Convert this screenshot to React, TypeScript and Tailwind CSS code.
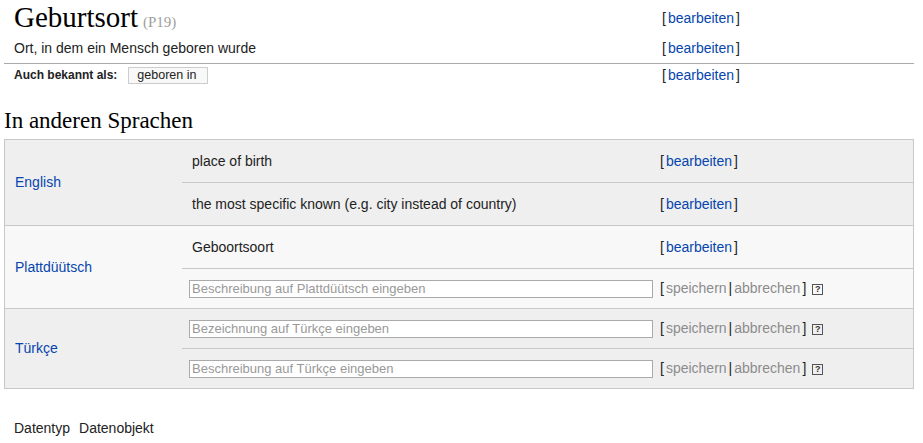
import React from 'react';

const Edit: React.FC = () => (
  <span className="text-[#222]">
    [<span className="mx-[2px] text-[#0645ad]">bearbeiten</span>]
  </span>
);

const SaveCancel: React.FC = () => (
  <span className="flex items-center">
    <span className="text-[#222]">[</span>
    <span className="ml-[2px] text-[#8c8c8c]">speichern</span>
    <span className="mx-[2px] text-[#222]">|</span>
    <span className="mr-[2px] text-[#8c8c8c]">abbrechen</span>
    <span className="text-[#222]">]</span>
    <span className="ml-[6px] mt-[2px] flex h-[11px] w-[11px] items-center justify-center border border-[#555] text-[9px] font-bold leading-none text-[#333]">
      ?
    </span>
  </span>
);

interface SubRowProps {
  text?: string;
  placeholder?: string;
  last?: boolean;
}

const SubRow: React.FC<SubRowProps> = ({ text, placeholder, last }) => {
  const h = placeholder ? (last ? 'h-[39px]' : 'h-[40px]') : last ? 'h-[42px]' : 'h-[43px]';
  return (
    <div className={`flex items-center ${h} ${last ? '' : 'border-b border-[#c8c8c8]'}`}>
      {placeholder ? (
        <div className="w-[478px] pl-[7px]">
          <div className="flex h-[18px] w-[464px] items-center border border-[#aaa] bg-white px-[2px] text-[13px] text-[#999]">
            {placeholder}
          </div>
        </div>
      ) : (
        <div className="w-[478px] pl-[10px] text-[#222]">{text}</div>
      )}
      <div>{placeholder ? <SaveCancel /> : <Edit />}</div>
    </div>
  );
};

interface LangProps {
  name: string;
  bg: string;
  rows: SubRowProps[];
  last?: boolean;
}

const LangGroup: React.FC<LangProps> = ({ name, bg, rows, last }) => (
  <div className={`flex ${bg} ${last ? '' : 'border-b border-[#c8c8c8]'}`}>
    <div className="flex w-[177px] items-center pl-[10px] text-[#0645ad]">{name}</div>
    <div className="flex-1">
      {rows.map((r, i) => (
        <SubRow key={i} {...r} last={i === rows.length - 1} />
      ))}
    </div>
  </div>
);

export default function App() {
  return (
    <div className="h-[443px] w-[923px] bg-white px-[4px] font-['Liberation_Sans',Arial,sans-serif] text-[14px] text-[#222]">
      <div className="w-[910px]">
        <div className="flex h-[36px] items-center pl-[10px] pt-[1px]">
          <div className="flex w-[648px] items-baseline">
            <span className="font-['Liberation_Serif',Georgia,serif] text-[29px] leading-none text-black">
              Geburtsort
            </span>
            <span className="ml-[5px] font-['Liberation_Serif',Georgia,serif] text-[15px] text-[#a0a0a0]">
              (P19)
            </span>
          </div>
          <Edit />
        </div>
        <div className="flex h-[27px] items-center pb-[3px] pl-[10px]">
          <div className="w-[648px]">Ort, in dem ein Mensch geboren wurde</div>
          <Edit />
        </div>
        <div className="flex h-[23px] items-center border-t border-[#aaa] pl-[10px]">
          <div className="flex w-[648px] items-center">
            <span className="text-[12px] font-bold text-[#222]">Auch bekannt als:</span>
            <span className="ml-[11px] flex h-[17px] w-[80px] items-center border border-[#ccc] bg-[#f8f8f8] pl-[8px] text-[12.5px]">
              geboren in
            </span>
          </div>
          <Edit />
        </div>
        <h2 className="mt-[20px] mb-[3px] h-[30px] font-['Liberation_Serif',Georgia,serif] text-[23px] leading-[30px] text-black">
          In anderen Sprachen
        </h2>
        <div className="w-[910px] border border-[#c8c8c8]">
          <LangGroup
            name="English"
            bg="bg-[#efefef]"
            rows={[
              { text: 'place of birth' },
              { text: 'the most specific known (e.g. city instead of country)' },
            ]}
          />
          <LangGroup
            name="Plattdüütsch"
            bg="bg-[#f8f8f8]"
            rows={[
              { text: 'Geboortsoort' },
              { placeholder: 'Beschreibung auf Plattdüütsch eingeben' },
            ]}
          />
          <LangGroup
            name="Türkçe"
            bg="bg-[#efefef]"
            last
            rows={[
              { placeholder: 'Bezeichnung auf Türkçe eingeben' },
              { placeholder: 'Beschreibung auf Türkçe eingeben' },
            ]}
          />
        </div>
        <div className="mt-[29px] flex pl-[10px]">
          <span>Datentyp</span>
          <span className="ml-[9px]">Datenobjekt</span>
        </div>
      </div>
    </div>
  );
}
